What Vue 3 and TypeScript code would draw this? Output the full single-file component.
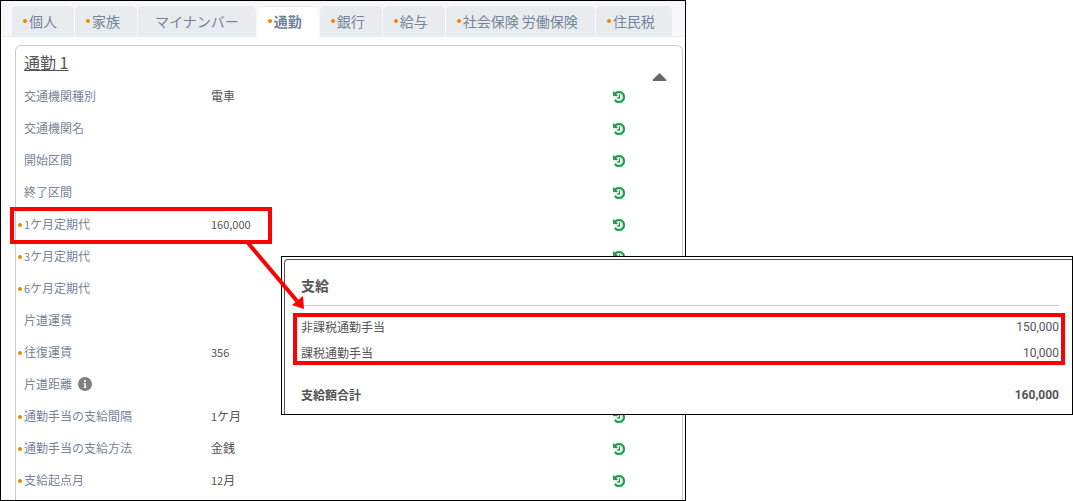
<script setup lang="ts">
import { ref } from 'vue'

interface Tab {
  label: string
  marked: boolean
}

interface Field {
  label: string
  value?: string
  marked?: boolean
  info?: boolean
}

const tabs: Tab[] = [
  { label: '個人', marked: true },
  { label: '家族', marked: true },
  { label: 'マイナンバー', marked: false },
  { label: '通勤', marked: true },
  { label: '銀行', marked: true },
  { label: '給与', marked: true },
  { label: '社会保険 労働保険', marked: true },
  { label: '住民税', marked: true },
]

const activeTab = ref('通勤')
const expanded = ref(true)

const fields: Field[] = [
  { label: '交通機関種別', value: '電車' },
  { label: '交通機関名' },
  { label: '開始区間' },
  { label: '終了区間' },
  { label: '1ケ月定期代', value: '160,000', marked: true },
  { label: '3ケ月定期代', marked: true },
  { label: '6ケ月定期代', marked: true },
  { label: '片道運賃' },
  { label: '往復運賃', value: '356', marked: true },
  { label: '片道距離', info: true },
  { label: '通勤手当の支給間隔', value: '1ケ月', marked: true },
  { label: '通勤手当の支給方法', value: '金銭', marked: true },
  { label: '支給起点月', value: '12月', marked: true },
]

const payments = [
  { label: '非課税通勤手当', amount: '150,000' },
  { label: '課税通勤手当', amount: '10,000' },
]

// Digits are set slightly smaller than the kanji beside them.
function segments(text: string): { text: string; digits: boolean }[] {
  return (text.match(/[\d,]+|[^\d,]+/g) ?? []).map((part) => ({
    text: part,
    digits: /^[\d,]+$/.test(part),
  }))
}
</script>

<template>
  <main class="page">
    <section class="employee">
      <div class="tabs" role="tablist">
        <button
          v-for="tab in tabs"
          :key="tab.label"
          type="button"
          role="tab"
          class="tab"
          :class="{ active: tab.label === activeTab }"
          :aria-selected="tab.label === activeTab"
          @click="activeTab = tab.label"
        >
          <span class="dot" :class="{ blank: !tab.marked }"></span>{{ tab.label }}
        </button>
      </div>

      <div class="card">
        <header class="card-head">
          <h2>通勤 1</h2>
          <button type="button" class="collapse" aria-label="折りたたむ" @click="expanded = !expanded">
            <svg width="15" height="8" viewBox="0 0 15 8"><path d="M7.5 0 14.6 7 14 8H1L.4 7z" fill="#666" /></svg>
          </button>
        </header>
        <dl v-if="expanded" class="fields">
          <div v-for="field in fields" :key="field.label" class="field">
            <dt>
              <span class="dot" :class="{ blank: !field.marked }"></span>
              <span class="text"><span v-for="(part, i) in segments(field.label)" :key="i" :class="{ digits: part.digits }">{{ part.text }}</span></span>
              <svg v-if="field.info" class="info" width="14" height="14" viewBox="0 0 14 14">
                <circle cx="7" cy="7" r="7" fill="#808080" />
                <path d="M6 3h2v2H6zM5.500 6H8v4h.5v1h-3v-1H6V7h-.5z" fill="#e4e4e4" />
              </svg>
            </dt>
            <dd class="text">
              <span v-for="(part, i) in segments(field.value ?? '')" :key="i" :class="{ digits: part.digits }">{{ part.text }}</span>
            </dd>
            <dd>
              <button type="button" class="history" :aria-label="field.label + 'の履歴'">
                <svg width="12" height="12" viewBox="0 128 1536 1536">
                  <path
                    fill="#1f9d4d"
                    stroke="#1f9d4d"
                    stroke-width="50"
                    d="M1536 896q0 156-61 298t-164 245-245 164-298 61q-172 0-327-72.500T177 1387q-7-10-6.500-22.500t8.500-20.500l137-138q10-9 25-9 16 2 23 12 73 95 179 147t225 52q104 0 198.500-40.500T1130 1258t109.500-163.500T1280 896t-40.500-198.500T1130 534 966.500 424.500 768 384q-98 0-188 35.500T420 521l137 138q31 30 14 69-17 40-59 40H64q-26 0-45-19T0 704V256q0-42 40-59 39-17 69 14l130 129q107-101 244.500-156.500T768 128q156 0 298 61t245 164 164 245 61 298zM896 608v448q0 14-9 23t-23 9H544q-14 0-23-9t-9-23v-64q0-14 9-23t23-9h224V608q0-14 9-23t23-9h64q14 0 23 9t9 23z"
                  />
                </svg>
              </button>
            </dd>
          </div>
        </dl>
      </div>
    </section>

    <div class="source-mark"></div>

    <section class="payslip">
      <div class="payslip-body">
        <h3>支給</h3>
        <dl class="marked-rows">
          <div v-for="item in payments" :key="item.label" class="pay-row">
            <dt>{{ item.label }}</dt>
            <dd>{{ item.amount }}</dd>
          </div>
        </dl>
        <dl class="total">
          <div class="pay-row">
            <dt>支給額合計</dt>
            <dd>160,000</dd>
          </div>
        </dl>
      </div>
    </section>

    <svg class="arrow" width="60" height="68" viewBox="0 0 60 68" aria-hidden="true">
      <path d="M2 1 51 59" stroke="#f00" stroke-width="4" fill="none" />
      <path d="M58 67 46 63 57 54z" fill="#f00" />
    </svg>
  </main>
</template>

<style>
body {
  margin: 0;
  background: #fff;
}
</style>

<style scoped>
.page {
  position: relative;
  font-family: "Noto Sans CJK JP", sans-serif;
  font-size: 12px;
  line-height: 16px;
  color: #555;
}

.page * {
  box-sizing: border-box;
}

button {
  font: inherit;
  color: inherit;
  border: 0;
  padding: 0;
  background: none;
  cursor: pointer;
}

h2,
h3,
dl,
dd {
  margin: 0;
}

svg {
  display: block;
}

.employee {
  width: 63.9%;
  border: 1px solid #000;
  background: #fff;
}

.tabs {
  display: flex;
  gap: 1px;
  padding: 5px 11px 0;
  background: #f8f8fb;
  border-bottom: 1px solid #e9ecef;
}

.tab {
  display: flex;
  align-items: center;
  height: 30px;
  padding: 0 17px 0 11px;
  border-radius: 5px 5px 0 0;
  background: #e9ecef;
  color: #74859a;
  font-size: 14px;
  white-space: nowrap;
}

.tab.active {
  height: 31px;
  margin-bottom: -1px;
  padding-bottom: 2px;
  background: #fff;
  box-shadow: inset 0 1px #e9ecef;
  font-weight: 700;
}

.dot {
  flex: none;
  width: 4px;
  height: 4px;
  margin-right: 2px;
  border-radius: 50%;
  background: #f28500;
}

.dot.blank {
  background: none;
}

.card {
  margin: 8px 2px 0 14px;
  padding-bottom: 3px;
  border: 1px solid #ccc;
  border-bottom: 0;
  border-radius: 6px 6px 0 0;
}

.card-head {
  display: flex;
  justify-content: space-between;
  height: 35px;
  padding: 4px 15px 0 8px;
}

h2 {
  font-size: 16px;
  line-height: 24px;
  font-weight: 400;
  text-decoration: underline;
}

.collapse {
  align-self: flex-end;
}

.field {
  display: grid;
  grid-template-columns: 193px 1fr 69px;
  align-items: center;
  height: 32px;
  padding-left: 2px;
}

dt {
  display: flex;
  align-items: center;
}

.field dt {
  color: #74859a;
}

.text {
  padding-bottom: 2px;
}

.digits {
  font-size: 11px;
}

.info {
  margin: 0 0 2px 6px;
}

.history {
  display: block;
}

.source-mark {
  position: absolute;
  left: 10px;
  top: 207px;
  width: 262px;
  height: 37px;
  border: 4px solid #f00;
}

.payslip {
  position: absolute;
  left: 281px;
  right: 0;
  top: 256px;
  border: 1px solid #000;
  background: #fff;
  padding: 2px 0 0 2px;
}

.payslip-body {
  border: solid #555;
  border-width: 1px 0 0 1px;
  border-radius: 4px 0 0 0;
  padding: 15px 7px 11px 8px;
}

h3 {
  margin: 0 6px 7px 8px;
  padding-bottom: 10px;
  border-bottom: 1px solid #ccc;
  font-size: 14px;
  line-height: 20px;
  font-weight: 700;
}

.marked-rows {
  display: grid;
  gap: 10px;
  padding: 2px 2px 0 4px;
  border: 4px solid #f00;
}

.pay-row {
  display: flex;
  justify-content: space-between;
}

.pay-row dd {
  font-family: Roboto, "Noto Sans CJK JP", sans-serif;
}

.total {
  margin: 22px 6px 0 8px;
  font-weight: 700;
}

.arrow {
  position: absolute;
  left: 246px;
  top: 242px;
}
</style>
